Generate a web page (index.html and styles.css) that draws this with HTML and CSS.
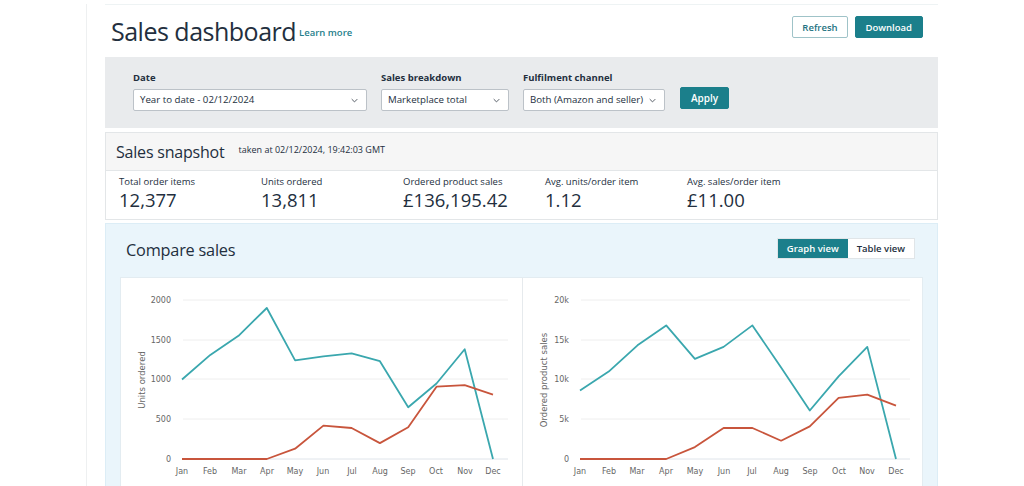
FILE: index.html
```html
<!DOCTYPE html>
<html lang="en">
<head>
<meta charset="UTF-8">
<meta name="viewport" content="width=device-width, initial-scale=1.0">
<title>Sales dashboard</title>
<link rel="stylesheet" href="styles.css">
</head>
<body>
<div class="page">
<div class="sheet">
    <header class="top">
        <h1>Sales dashboard<a class="learn" href="#">Learn more</a></h1>
        <div class="actions">
            <button class="btn">Refresh</button>
            <button class="btn primary">Download</button>
        </div>
    </header>

    <!-- Filters -->
    <section class="filters">
        <div class="field">
            <label>Date</label>
            <div class="select w-date">Year to date - 02/12/2024
                <svg class="chev" viewBox="0 0 10 6"><path d="M1 1l4 4 4-4"/></svg></div>
        </div>
        <div class="field">
            <label>Sales breakdown</label>
            <div class="select w-break">Marketplace total
                <svg class="chev" viewBox="0 0 10 6"><path d="M1 1l4 4 4-4"/></svg></div>
        </div>
        <div class="field">
            <label>Fulfilment channel</label>
            <div class="select w-chan">Both (Amazon and seller)
                <svg class="chev" viewBox="0 0 10 6"><path d="M1 1l4 4 4-4"/></svg></div>
        </div>
        <button class="btn primary apply">Apply</button>
    </section>

    <!-- Snapshot -->
    <section class="snapshot">
        <div class="snap-head">
            <h2>Sales snapshot</h2>
            <span class="taken">taken at 02/12/2024, 19:42:03 GMT</span>
        </div>
        <div class="metrics">
            <div class="metric"><div class="m-label">Total order items</div><div class="m-value">12,377</div></div>
            <div class="metric"><div class="m-label">Units ordered</div><div class="m-value">13,811</div></div>
            <div class="metric"><div class="m-label">Ordered product sales</div><div class="m-value">£136,195.42</div></div>
            <div class="metric"><div class="m-label">Avg. units/order item</div><div class="m-value">1.12</div></div>
            <div class="metric"><div class="m-label">Avg. sales/order item</div><div class="m-value">£11.00</div></div>
        </div>
    </section>

    <!-- Compare sales -->
    <section class="compare">
        <div class="compare-head">
            <h2>Compare sales</h2>
            <div class="toggle">
                <span class="on">Graph view</span><span>Table view</span>
            </div>
        </div>
        <div class="charts">
            <div class="chart">
                <svg viewBox="0 0 401 212" width="401" height="212">
                    <g class="grid">
                        <line x1="62" y1="22" x2="387" y2="22"/>
                        <line x1="62" y1="62" x2="387" y2="62"/>
                        <line x1="62" y1="101" x2="387" y2="101"/>
                        <line x1="62" y1="141" x2="387" y2="141"/>
                        <line class="base" x1="62" y1="181" x2="387" y2="181"/>
                    </g>
                    <g class="ylab">
                        <text x="50" y="25">2000</text>
                        <text x="50" y="65">1500</text>
                        <text x="50" y="104">1000</text>
                        <text x="50" y="144">500</text>
                        <text x="50" y="184">0</text>
                    </g>
                    <text class="ytitle" transform="translate(24 102) rotate(-90)">Units ordered</text>
                    <g class="xlab">
                        <text x="61" y="196">Jan</text><text x="89" y="196">Feb</text><text x="118" y="196">Mar</text>
                        <text x="146" y="196">Apr</text><text x="174" y="196">May</text><text x="202" y="196">Jun</text>
                        <text x="231" y="196">Jul</text><text x="259" y="196">Aug</text><text x="287" y="196">Sep</text>
                        <text x="315" y="196">Oct</text><text x="344" y="196">Nov</text><text x="372" y="196">Dec</text>
                    </g>
                    <polyline class="line teal" points="61,101.5 89.3,76.9 117.5,57.8 145.8,30 174.1,82.4 202.4,78.4 230.6,75.3 258.9,83.2 287.2,129.3 315.5,105.5 343.7,71.3 372,181"/>
                    <polyline class="line red" points="61,181 89.3,181 117.5,181 145.8,181 174.1,170.7 202.4,147.6 230.6,150 258.9,165.1 287.2,149.2 315.5,108.7 343.7,107.1 372,116.6"/>
                </svg>
            </div>
            <div class="chart">
                <svg viewBox="0 0 401 212" width="401" height="212">
                    <g class="grid">
                        <line x1="58" y1="22" x2="387" y2="22"/>
                        <line x1="58" y1="62" x2="387" y2="62"/>
                        <line x1="58" y1="101" x2="387" y2="101"/>
                        <line x1="58" y1="141" x2="387" y2="141"/>
                        <line class="base" x1="58" y1="181" x2="387" y2="181"/>
                    </g>
                    <g class="ylab">
                        <text x="46" y="25">20k</text>
                        <text x="46" y="65">15k</text>
                        <text x="46" y="104">10k</text>
                        <text x="46" y="144">5k</text>
                        <text x="46" y="184">0</text>
                    </g>
                    <text class="ytitle" transform="translate(24 102) rotate(-90)">Ordered product sales</text>
                    <g class="xlab">
                        <text x="57" y="196">Jan</text><text x="86" y="196">Feb</text><text x="114" y="196">Mar</text>
                        <text x="143" y="196">Apr</text><text x="172" y="196">May</text><text x="201" y="196">Jun</text>
                        <text x="229" y="196">Jul</text><text x="258" y="196">Aug</text><text x="287" y="196">Sep</text>
                        <text x="316" y="196">Oct</text><text x="344" y="196">Nov</text><text x="373" y="196">Dec</text>
                    </g>
                    <polyline class="line teal" points="57,112.6 85.7,93.6 114.5,67.3 143.2,47.4 171.9,80.8 200.6,68.9 229.4,47.4 258.1,89.6 286.8,132.5 315.6,98.3 344.3,68.9 373,181"/>
                    <polyline class="line red" points="57,181 85.7,181 114.5,181 143.2,181 171.9,169.1 200.6,150 229.4,150 258.1,162.7 286.8,148.4 315.6,119.8 344.3,116.6 373,127.7"/>
                </svg>
            </div>
        </div>
    </section>
</div>
</div>
</body>
</html>
```

FILE: styles.css
```css
html, body {
    margin: 0;
    height: 486px;
    overflow: hidden;
}
body {
    font-family: 'Open Sans', sans-serif;
    color: #232f3e;
    background: #fff;
}
.page {
    margin-left: 86px;
    border-left: 1px solid #eef0f1;
    padding-left: 18px;
    height: 486px;
}
.sheet {
    width: 833px;
    border-top: 1px solid #eef3f4;
    margin-top: 4px;
}

/* header */
.top {
    display: flex;
    justify-content: space-between;
    height: 52px;
    padding: 0 15px 0 6px;
}
.top h1 {
    margin: 10px 0 0;
    font-size: 25px;
    line-height: 32px;
    font-weight: 400;
    letter-spacing: -0.5px;
}
.learn {
    font-size: 9.5px;
    font-weight: 600;
    color: #1f7f8c;
    text-decoration: none;
    letter-spacing: 0;
    vertical-align: 5px;
    margin-left: 3px;
}
.actions {
    display: flex;
    gap: 7px;
    margin-top: 11px;
}
.btn {
    font-family: inherit;
    font-size: 9.5px;
    font-weight: 600;
    height: 22px;
    padding: 0 9px;
    border: 1px solid #9fc3c8;
    border-radius: 2px;
    background: #fff;
    color: #1f7382;
    cursor: pointer;
}
.btn.primary {
    background: #1b7f8b;
    border-color: #1b7f8b;
    color: #fff;
    padding: 0 10px;
}

/* filters */
.filters {
    display: flex;
    align-items: flex-start;
    gap: 14px;
    height: 71px;
    box-sizing: border-box;
    padding: 14px 0 0 28px;
    background: #e9ebed;
}
.field label {
    display: block;
    font-size: 9.5px;
    font-weight: 700;
    line-height: 14px;
    margin-bottom: 4px;
}
.select {
    position: relative;
    box-sizing: border-box;
    height: 22px;
    padding: 0 20px 0 6px;
    font-size: 9.7px;
    line-height: 20px;
    background: #fff;
    border: 1px solid #bcc2c8;
    border-radius: 2px;
    white-space: nowrap;
}
.w-date { width: 234px; }
.w-break { width: 128px; }
.w-chan { width: 142px; }
.chev {
    position: absolute;
    right: 8px;
    top: 8px;
    width: 7px;
    height: 5px;
    fill: none;
    stroke: #545b64;
    stroke-width: 1.4;
}
.apply {
    margin-top: 16px;
    margin-left: 1px;
    padding: 0 11px;
    font-size: 10px;
}

/* snapshot */
.snapshot {
    margin-top: 4px;
    border: 1px solid #e3e6e8;
}
.snap-head {
    display: flex;
    align-items: center;
    gap: 14px;
    height: 37px;
    padding-left: 10px;
    background: #f6f6f6;
    border-bottom: 1px solid #e3e6e8;
}
.snap-head h2 {
    margin: 0;
    font-size: 16px;
    font-weight: 400;
    letter-spacing: -0.2px;
}
.taken {
    font-size: 9px;
    margin-top: -4px;
}
.metrics {
    display: flex;
    height: 48px;
    padding: 4px 0 0 13px;
    box-sizing: border-box;
}
.metric {
    width: 142px;
}
.m-label {
    font-size: 9.5px;
    line-height: 13px;
}
.m-value {
    font-size: 18.5px;
    line-height: 24px;
}

/* compare sales */
.compare {
    margin-top: 3px;
    background: #eaf5fb;
    border: 1px solid #dcedf6;
    border-bottom: 0;
    padding: 0 14px;
    height: 270px;
}
.compare-head {
    display: flex;
    justify-content: space-between;
    align-items: center;
    height: 49px;
    padding: 0 8px 0 6px;
    margin-bottom: 4px;
}
.compare-head h2 {
    margin: 2px 0 0;
    font-size: 16.3px;
    font-weight: 400;
    letter-spacing: -0.2px;
}
.toggle {
    display: flex;
    font-size: 9.5px;
    font-weight: 600;
    line-height: 19px;
    background: #fff;
    border: 1px solid #e0e5e8;
}
.toggle span {
    padding: 0 9px;
}
.toggle .on {
    background: #1b7f8b;
    color: #fff;
}
.charts {
    display: grid;
    grid-template-columns: 401px 402px;
    background: #fff;
    border: 1px solid #e3ecf1;
    border-bottom: 0;
}
.chart + .chart {
    border-left: 1px solid #e6eaed;
}
.chart svg {
    display: block;
}
.grid line {
    stroke: #eeeeee;
    stroke-width: 1;
}
.grid .base {
    stroke: #dfe4ea;
}
.ylab text, .xlab text, .ytitle {
    font-family: 'DejaVu Sans', sans-serif;
    font-size: 8px;
    fill: #666;
}
.ylab text {
    text-anchor: end;
}
.xlab text, .ytitle {
    text-anchor: middle;
}
.ytitle {
    font-size: 8.5px;
}
.line {
    fill: none;
    stroke-width: 1.8;
    stroke-linejoin: round;
}
.teal { stroke: #3aa7ae; }
.red { stroke: #c8553c; }
```
